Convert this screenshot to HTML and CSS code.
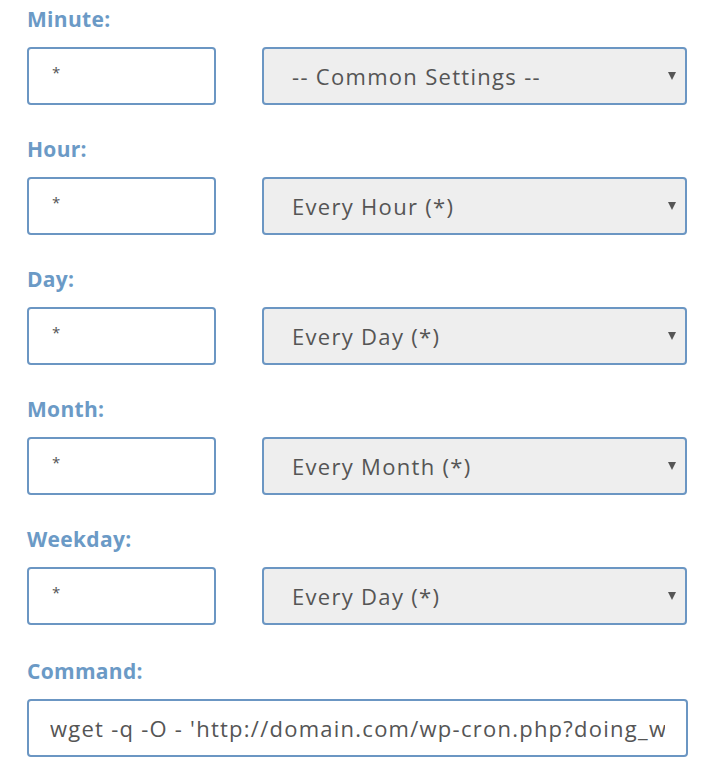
FILE: index.html
```html
<!DOCTYPE html>
<html lang="en">
<head>
    <meta charset="UTF-8">
    <meta name="viewport" content="width=device-width, initial-scale=1.0">
    <title>Cron Job</title>
    <link rel="stylesheet" href="styles.css">
</head>
<body>
    <form class="cron-form">
        <div class="field">
            <label for="minute">Minute:</label>
            <div class="field-row">
                <input type="text" id="minute" class="text-input small-input" value="*">
                <div class="select-wrap">
                    <select class="select-input">
                        <option>-- Common Settings --</option>
                    </select>
                </div>
            </div>
        </div>
        <div class="field">
            <label for="hour">Hour:</label>
            <div class="field-row">
                <input type="text" id="hour" class="text-input small-input" value="*">
                <div class="select-wrap">
                    <select class="select-input">
                        <option>Every Hour (*)</option>
                    </select>
                </div>
            </div>
        </div>
        <div class="field">
            <label for="day">Day:</label>
            <div class="field-row">
                <input type="text" id="day" class="text-input small-input" value="*">
                <div class="select-wrap">
                    <select class="select-input">
                        <option>Every Day (*)</option>
                    </select>
                </div>
            </div>
        </div>
        <div class="field">
            <label for="month">Month:</label>
            <div class="field-row">
                <input type="text" id="month" class="text-input small-input" value="*">
                <div class="select-wrap">
                    <select class="select-input">
                        <option>Every Month (*)</option>
                    </select>
                </div>
            </div>
        </div>
        <div class="field">
            <label for="weekday">Weekday:</label>
            <div class="field-row">
                <input type="text" id="weekday" class="text-input small-input" value="*">
                <div class="select-wrap">
                    <select class="select-input">
                        <option>Every Day (*)</option>
                    </select>
                </div>
            </div>
        </div>
        <div class="field command-field">
            <label for="command">Command:</label>
            <input type="text" id="command" class="text-input command-input" value="wget -q -O - 'http://domain.com/wp-cron.php?doing_wp_cron' > /dev/null 2>&1" autofocus>
        </div>
    </form>
</body>
</html>
```

FILE: styles.css
```css
body {
    margin: 0;
    padding: 0;
    background-color: #fff;
    font-family: 'Open Sans', sans-serif;
}

.cron-form {
    padding: 7px 20px 0 27px;
}

.field {
    margin-bottom: 32px;
}

.field label {
    display: block;
    height: 24px;
    line-height: 24px;
    margin-bottom: 16px;
    font-size: 21px;
    font-weight: bold;
    letter-spacing: 0.3px;
    color: #6b9ac6;
}

.field-row {
    display: flex;
    gap: 46px;
}

.text-input,
.select-input {
    height: 58px;
    box-sizing: border-box;
    border: 2px solid #6b96c3;
    border-radius: 4px;
    font-family: 'Open Sans', sans-serif;
    font-size: 22px;
    letter-spacing: 1.3px;
    color: #555;
    outline: none;
}

.text-input {
    width: 189px;
    padding: 0 22px;
    background-color: #fff;
    caret-color: #333;
}

.small-input {
    font-size: 15px;
    padding: 0 22px 8px 23px;
}

.select-wrap {
    position: relative;
    width: 426px;
}

.select-input {
    width: 100%;
    padding: 0 28px;
    background-color: #eee;
    -webkit-appearance: none;
    appearance: none;
}

.select-wrap::after {
    content: "";
    position: absolute;
    right: 11px;
    top: 25px;
    border-left: 4.5px solid transparent;
    border-right: 4.5px solid transparent;
    border-top: 8px solid #555;
    pointer-events: none;
}

.command-field {
    padding-top: 2px;
}

.command-input {
    width: 661px;
    padding: 0 21px;
    letter-spacing: 1.25px;
}
```
